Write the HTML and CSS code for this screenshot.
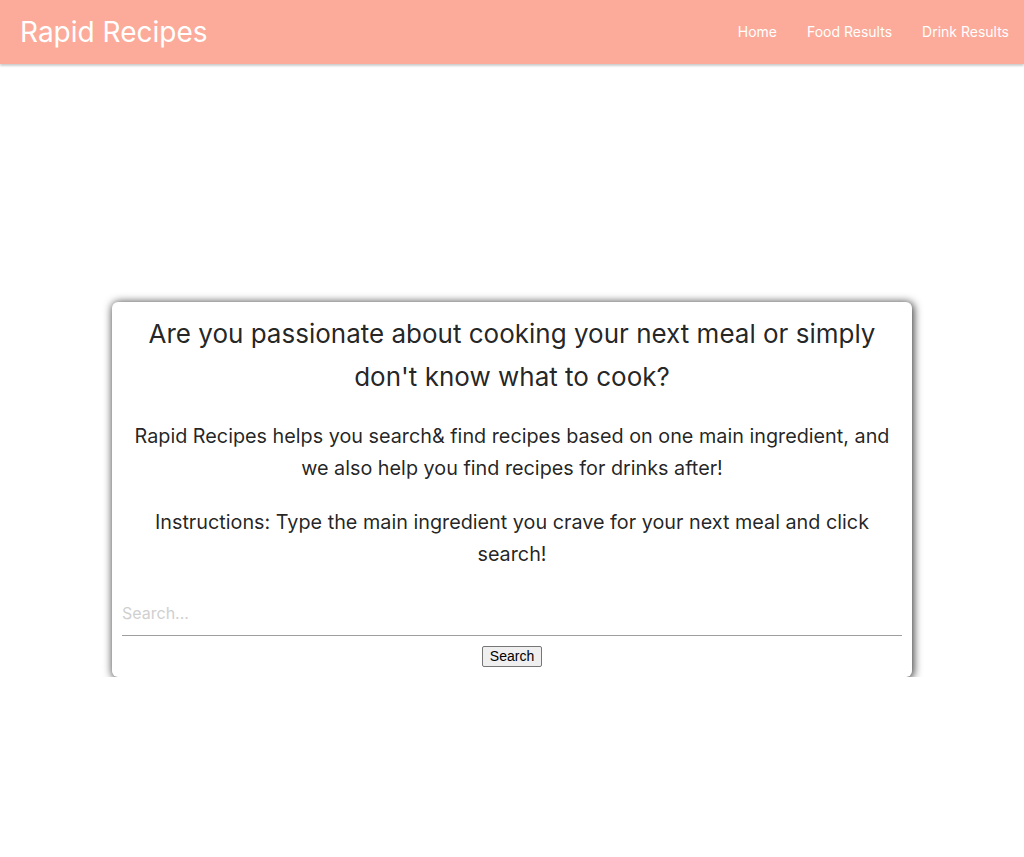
FILE: index.html
```html
<!DOCTYPE html>
<html lang="en">
<head>
<meta charset="utf-8">
<title>Rapid Recipes</title>
<link rel="stylesheet" href="styles.css">
</head>
<body>
<nav class="navbar">
  <a class="brand" href="#">Rapid Recipes</a>
  <ul class="nav-links">
    <li><a href="#">Home</a></li>
    <li><a href="#">Food Results</a></li>
    <li><a href="#">Drink Results</a></li>
  </ul>
</nav>
<main class="main">
  <section class="card">
    <h5 class="card-title">Are you passionate about cooking your next meal or simply don't know what to cook?</h5>
    <p class="card-text">Rapid Recipes helps you search&amp; find recipes based on one main ingredient, and we also help you find recipes for drinks after!</p>
    <p class="card-text">Instructions: Type the main ingredient you crave for your next meal and click search!</p>
    <input class="search-input" type="text" placeholder="Search...">
    <div class="btn-row"><button class="search-btn" type="button">Search</button></div>
  </section>
</main>
</body>
</html>
```
FILE: styles.css
```css
* { box-sizing: border-box; }
html, body { margin: 0; padding: 0; }
body {
  font-family: Inter, "Noto Sans", "Liberation Sans", sans-serif;
  color: rgba(0, 0, 0, 0.87);
  background: #fff;
}
.navbar {
  height: 64px;
  background: #fcab9a;
  display: flex;
  align-items: center;
  justify-content: space-between;
  padding-left: 20px;
  box-shadow: 0 2px 2px 0 rgba(0,0,0,0.14), 0 1px 3px 0 rgba(0,0,0,0.10);
}
.brand {
  color: #fff;
  text-decoration: none;
  font-size: 28px;
  line-height: 64px;
}
.nav-links {
  list-style: none;
  display: flex;
  margin: 0;
  padding: 0;
}
.nav-links a {
  display: block;
  color: #fff;
  text-decoration: none;
  font-size: 14px;
  padding: 0 15px;
  line-height: 64px;
}
.main {
  display: flex;
  justify-content: center;
  padding-top: 238px;
}
.card {
  width: 800px;
  background: #fff;
  border-radius: 6px;
  padding: 10px;
  text-align: center;
  box-shadow: 1px 1px 8px 1px rgba(0,0,0,0.75);
}
.card-title {
  font-size: 26px;
  font-weight: 400;
  line-height: 43px;
  margin: 0 10px 22px;
}
.card-text {
  font-size: 19.8px;
  line-height: 32px;
  margin: 0 0 22px;
}
.card-text + .card-text { margin-bottom: 21px; }
.search-input {
  display: block;
  width: 100%;
  height: 45px;
  border: none;
  border-bottom: 1px solid #9e9e9e;
  outline: none;
  padding: 0;
  font-family: inherit;
  font-size: 16px;
  color: rgba(0,0,0,0.87);
  background: transparent;
  margin: 0 0 10px;
}
.search-input::placeholder { color: #d0d0d0; }
.btn-row { display: flex; justify-content: center; }
.search-btn {
  font-family: "Liberation Sans", Arial, sans-serif;
  font-size: 14px;
  color: #000;
  background: #efefef;
  border: 1px solid #767676;
  border-radius: 2px;
  padding: 1px 7px;
  height: 21px;
  line-height: 17px;
}
```
